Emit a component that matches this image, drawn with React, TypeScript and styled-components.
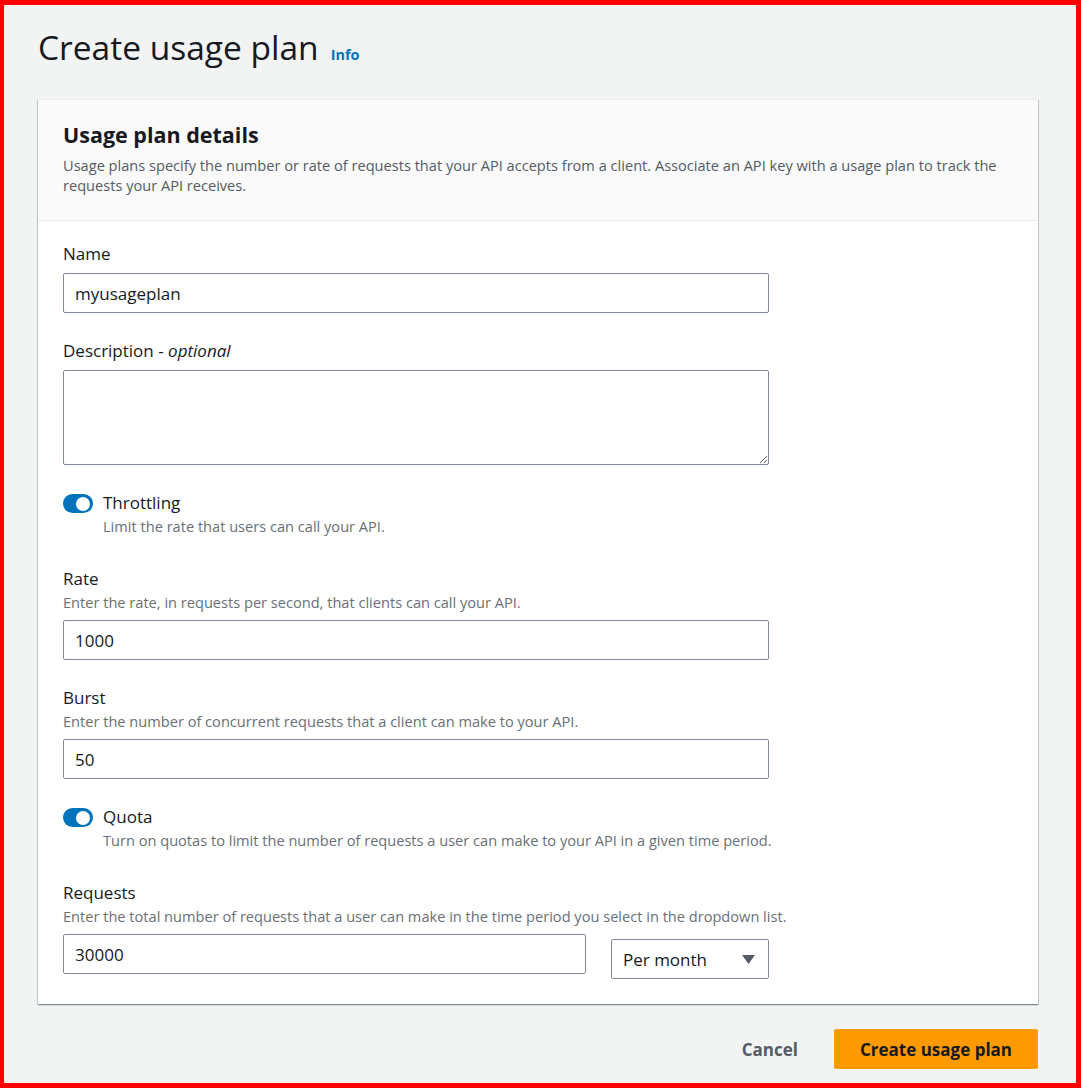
import { createGlobalStyle, styled } from "styled-components";

const GlobalStyle = createGlobalStyle`
  html, body {
    margin: 0;
    padding: 0;
  }
  body {
    font-family: "Open Sans", "Noto Sans", Arial, sans-serif;
    color: #16191f;
    -webkit-font-smoothing: antialiased;
  }
  * {
    box-sizing: border-box;
  }
`;

const Frame = styled.div`
  width: 1081px;
  height: 1088px;
  border: 5px solid #ff0000;
  border-left-width: 4px;
  background-color: #f2f3f3;
  padding: 22px 38px 0 34px;
  display: flex;
  flex-direction: column;
`;

const PageHeader = styled.div`
  display: flex;
  align-items: baseline;
  gap: 12px;
  margin-bottom: 32px;
`;

const PageTitle = styled.h1`
  margin: 0;
  font-size: 33.5px;
  line-height: 40px;
  font-weight: 400;
  color: #16191f;
`;

const InfoLink = styled.a`
  font-size: 14.5px;
  font-weight: 700;
  color: #0073bb;
  text-decoration: none;
  cursor: pointer;
`;

const Card = styled.section`
  background-color: #ffffff;
  box-shadow: 0 1px 1px 0 rgba(0, 28, 36, 0.3), 1px 1px 1px 0 rgba(0, 28, 36, 0.15),
    -1px 1px 1px 0 rgba(0, 28, 36, 0.15);
  border-top: 1px solid #eaeded;
`;

const CardHeader = styled.header`
  background-color: #fafafa;
  border-bottom: 1px solid #eaeded;
  padding: 21px 25px 25px;
`;

const CardTitle = styled.h2`
  margin: 0 0 6px;
  font-size: 21.5px;
  line-height: 28px;
  font-weight: 700;
  color: #16191f;
`;

const CardDescription = styled.p`
  margin: 0;
  font-size: 14.6px;
  line-height: 20px;
  color: #545b64;
`;

const CardBody = styled.div`
  padding: 22px 25px 25px;
  display: flex;
  flex-direction: column;
  gap: 27px;
`;

const Field = styled.div`
  display: flex;
  flex-direction: column;
`;

const Label = styled.label`
  font-size: 17px;
  line-height: 22px;
  color: #16191f;

  em {
    font-style: italic;
  }
`;

const Hint = styled.div`
  margin-top: 2px;
  font-size: 14.6px;
  line-height: 20px;
  color: #687078;
`;

const Control = styled.div`
  margin-top: 8px;
  display: flex;
  align-items: flex-start;
  gap: 25px;
`;

const TextInput = styled.input<{ $width?: number }>`
  width: ${p => p.$width ?? 706}px;
  height: 40px;
  padding: 0 11px;
  border: 1px solid #7d8998;
  border-radius: 2px;
  font-family: inherit;
  font-size: 17px;
  color: #16191f;
  background: #ffffff;
  outline: none;
`;

const TextArea = styled.textarea`
  width: 706px;
  height: 95px;
  padding: 8px 11px;
  border: 1px solid #7d8998;
  border-radius: 2px;
  font-family: inherit;
  font-size: 17px;
  resize: vertical;
  outline: none;
  display: block;
`;

const ToggleRow = styled.div`
  display: flex;
  align-items: flex-start;
  gap: 10px;
  margin-bottom: 5px;
`;

const Toggle = styled.span<{ $on: boolean }>`
  flex: none;
  width: 30px;
  height: 19px;
  margin-top: 2px;
  border-radius: 10px;
  background-color: ${p => (p.$on ? "#0073bb" : "#aab7b8")};
  display: flex;
  align-items: center;
  justify-content: ${p => (p.$on ? "flex-end" : "flex-start")};
  padding: 0 3px;

  &::after {
    content: "";
    width: 14px;
    height: 14px;
    border-radius: 50%;
    background: #ffffff;
  }
`;

const ToggleText = styled.div`
  display: flex;
  flex-direction: column;
`;

const Select = styled.div`
  width: 158px;
  height: 40px;
  margin-top: 5px;
  padding: 0 13px 0 11px;
  border: 1px solid #7d8998;
  border-radius: 2px;
  display: flex;
  align-items: center;
  justify-content: space-between;
  font-size: 17px;
  color: #16191f;
  background: #ffffff;
  cursor: pointer;
`;

const Footer = styled.div`
  display: flex;
  justify-content: flex-end;
  align-items: center;
  gap: 16px;
  margin-top: 25px;
`;

const Button = styled.button`
  height: 40px;
  padding: 0 20px;
  border: none;
  background: transparent;
  font-family: inherit;
  font-size: 17px;
  font-weight: 700;
  color: #545b64;
  cursor: pointer;
`;

const PrimaryButton = styled(Button)`
  width: 204px;
  border-radius: 2px;
  background-color: #ff9900;
  color: #16191f;
`;

function ToggleField({ label, hint }: { label: string; hint: string }) {
  return (
    <ToggleRow>
      <Toggle $on />
      <ToggleText>
        <Label>{label}</Label>
        <Hint>{hint}</Hint>
      </ToggleText>
    </ToggleRow>
  );
}

export default function App() {
  return (
    <>
      <GlobalStyle />
      <Frame>
        <PageHeader>
          <PageTitle>Create usage plan</PageTitle>
          <InfoLink>Info</InfoLink>
        </PageHeader>
        <Card>
          <CardHeader>
            <CardTitle>Usage plan details</CardTitle>
            <CardDescription>
              Usage plans specify the number or rate of requests that your API accepts from a
              client. Associate an API key with a usage plan to track the requests your API
              receives.
            </CardDescription>
          </CardHeader>
          <CardBody>
            <Field>
              <Label>Name</Label>
              <Control>
                <TextInput defaultValue="myusageplan" />
              </Control>
            </Field>
            <Field>
              <Label>
                Description - <em>optional</em>
              </Label>
              <Control>
                <TextArea />
              </Control>
            </Field>
            <ToggleField label="Throttling" hint="Limit the rate that users can call your API." />
            <Field>
              <Label>Rate</Label>
              <Hint>Enter the rate, in requests per second, that clients can call your API.</Hint>
              <Control>
                <TextInput defaultValue="1000" />
              </Control>
            </Field>
            <Field>
              <Label>Burst</Label>
              <Hint>Enter the number of concurrent requests that a client can make to your API.</Hint>
              <Control>
                <TextInput defaultValue="50" />
              </Control>
            </Field>
            <ToggleField
              label="Quota"
              hint="Turn on quotas to limit the number of requests a user can make to your API in a given time period."
            />
            <Field>
              <Label>Requests</Label>
              <Hint>
                Enter the total number of requests that a user can make in the time period you
                select in the dropdown list.
              </Hint>
              <Control>
                <TextInput $width={523} defaultValue="30000" />
                <Select>
                  <span>Per month</span>
                  <svg width="13" height="9" viewBox="0 0 13 9">
                    <path d="M0 0h13L6.5 9z" fill="#545b64" />
                  </svg>
                </Select>
              </Control>
            </Field>
          </CardBody>
        </Card>
        <Footer>
          <Button>Cancel</Button>
          <PrimaryButton>Create usage plan</PrimaryButton>
        </Footer>
      </Frame>
    </>
  );
}
